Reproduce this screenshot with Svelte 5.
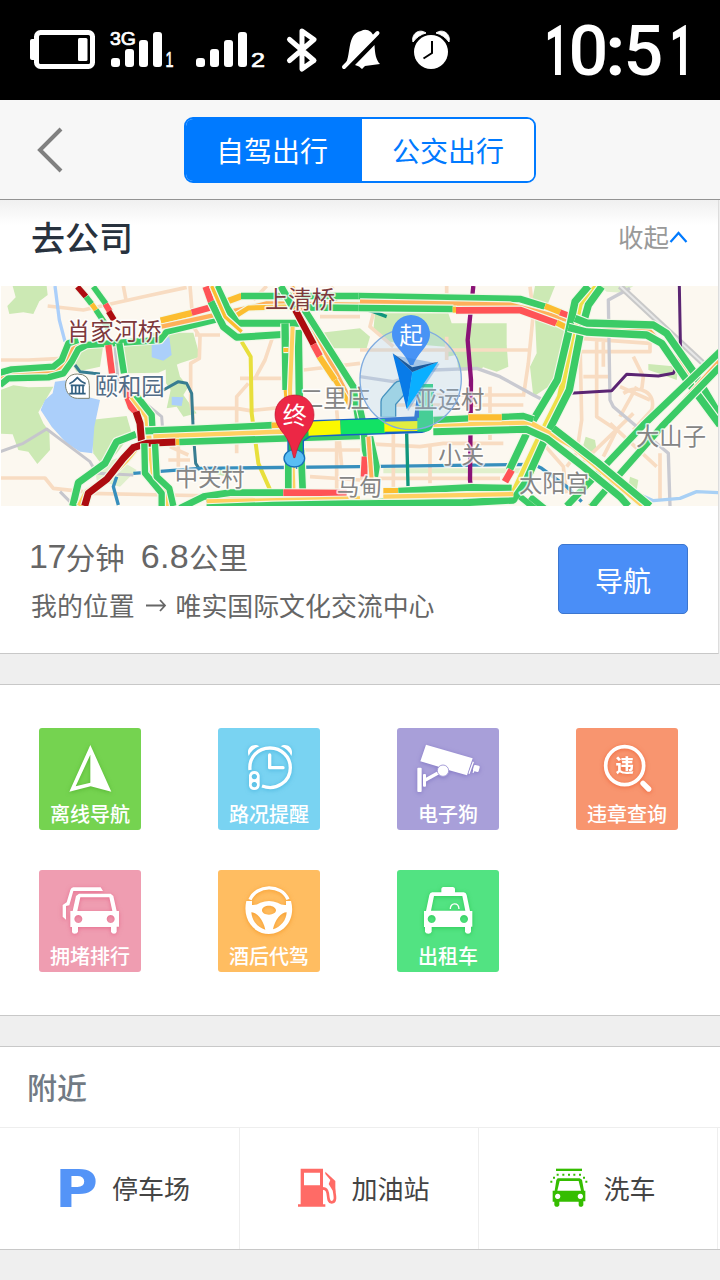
<script>
  const G = '#3bcb66', Y = '#ffd060', O = '#ffb05a', R = '#ff5356', D = '#ad0c10', A = '#fcbd30', L = '#efe048';

  // Areas: [path, fill]
  const areas = [
    ['M38 18H140L143 45 118 64 100 102 70 97 28 102 22 78 47 52Z', '#cce9b4'],
    ['M0 330L40 316 85 322 160 320 115 397 130 430 148 455 150 510 112 552 85 515 55 510 38 463 0 461Z', '#cce9b4'],
    ['M455 158H580L600 230 540 250 475 278 380 280 370 200 455 185Z', '#cce9b4'],
    ['M190 215L310 195 300 260 230 275Z', '#cce9b4'],
    ['M270 420L380 408 395 460 350 520 310 560 280 520Z', '#cce9b4'],
    ['M285 560L350 535 410 570 360 620 290 600Z', '#e0f0cc'],
    ['M497 258L530 252 540 290 565 320 550 345 590 400 550 410 530 380 500 385 512 330 498 310Z', '#cce9b4'],
    ['M950 160L1080 145 1110 170 1100 205H1000L955 200Z', '#cce9b4'],
    ['M650 560L700 570 680 590 640 580Z', '#cce9b4'],
    ['M1125 100H1345L1355 130H1520V195L1440 270 1375 272 1370 225 1340 230 1335 200 1160 185 1120 150Z', '#cce9b4'],
    ['M1450 185L1520 195 1525 260 1490 275 1450 262Z', '#cce9b4'],
    ['M1605 18H1665L1640 80 1595 70Z', '#cce9b4'],
    ['M1605 110H1700L1675 300 1600 350 1590 260 1610 220Z', '#cce9b4'],
    ['M1800 18H1900L1870 38 1820 35Z', '#e0f0cc'],
    ['M1945 252L2035 260 2030 300 1975 280 1945 270Z', '#cce9b4'],
    ['M1757 470L1785 480 1790 510 1765 520 1750 495Z', '#cce9b4'],
    ['M1890 590L1915 600 1910 630 1885 620Z', '#cce9b4'],
    ['M1150 565H1560L1580 580H1150Z', '#e0f0cc'],
    ['M165 305L205 300 260 350 300 360 283 440 277 520 240 515 200 490 155 440 122 390 135 360 158 340Z', '#abcffa'],
    ['M455 175L508 172 515 225 490 242 455 232Z', '#abcffa'],
    ['M515 350L550 352 545 378 515 375Z', '#abcffa']
  ];

  // Minor streets, drawn thin without casing: [path, stroke, width]
  const streets = [
    ['M143 78L250 90 430 50 560 22M370 18L378 60M570 18L580 140 600 170 598 235 572 250V360L580 420M0 240H85L190 235M585 165H660M820 165L795 240 765 295M720 295H870M580 385H710L750 392 870 380M710 520V350L745 310M800 18L760 60M960 60L1000 20M930 120L970 180M910 270L1080 250M1010 390L1025 560M870 510H1080M930 590L1080 600M960 110H1080M1010 430V650M510 500L565 525M505 540H570M535 490V560M0 594H135L160 625 250 635M270 640L500 645 760 650', '#f8dcc2', 11],
    ['M1120 100L1110 140 1180 200M1080 210H1590M1590 20L1600 100 1585 250 1570 350M1340 240V170M1160 345H1570M1160 375H1570M1470 320V480M1080 490L1260 500 1330 490 1510 490M1180 440V660M1290 500V610M1080 595H1500M1740 175L1950 190V215H1740M1740 180L1745 420 1730 520 1700 560M1750 290H1830M1790 180V410L1850 450 1810 530M1810 185V260M1900 230L1930 290 1925 330M1860 320L1950 360M1910 320L1860 410M1870 340C1920 310 1970 340 1955 390L1900 450M1830 430L1970 560M1740 555L1900 400M1620 480L1690 560 1700 640M1980 520V660M1340 18V60', '#f8dcc2', 11],
    ['M165 18L178 120 195 185', '#abcffa', 10],
    ['M0 515L70 490 140 447 170 470 270 545 290 580 400 585M430 365L485 410 492 500M345 200L355 310M180 635L215 670', '#c6c6cc', 9],
    ['M1080 290L1180 305 1300 270 1430 265 1500 290 1600 345 1640 365M1890 25L1825 60 1830 360 1840 380 1940 465 2005 520 2010 678', '#c9cad1', 10],
    ['M1860 18L2115 255', '#c9c9c9', 18],
    ['M1860 18L2115 255', '#e8e8e8', 6],
    ['M725 185L752 230 755 400 775 550 815 640 820 665', '#e8df3c', 12],
    ['M225 255L240 275 280 280 300 282M490 330L535 305 560 310 575 340 580 460 587 550 600 570M615 640L625 665', '#377d91', 9],
    ['M400 580L600 565 1080 560 1600 553 1625 565 1700 620 1745 665M350 590L340 620 355 675', '#378fbd', 10],
    ['M1000 65L1120 95 1160 110M1220 460L1225 655', '#10967c', 10],
    ['M1420 18L1403 180 1413 300 1410 600 1420 678', '#8a1377', 13],
    ['M2038 18L2042 235 2020 280 1975 288 1880 283 1835 332 1710 340', '#5b2573', 9],
    ['M1910 640L1960 662 2040 655 2090 635 2160 638', '#a8d0f5', 10]
  ];

  // Main roads with a pale casing: [path, stroke, width]
  const roads = [
    ['M0 297L55 276 155 274 195 255 215 210 240 190', O, 13],
    ['M0 278L35 268 160 260 185 240 205 190 235 180', G, 19],
    ['M0 315L25 295 145 292 190 280 215 245 235 208 260 195 480 180 500 155 650 118', G, 19],
    ['M482 122L580 98', A, 19], ['M575 98L640 80', R, 19], ['M638 80L725 48', A, 19], ['M484 140L750 82 800 70 1080 74', O, 13],
    ['M723 48L1080 48', G, 19], ['M700 112L745 84 900 80', A, 15], ['M900 82L1080 84', G, 20],
    ['M232 20L258 50', D, 17], ['M258 50L275 72', G, 17], ['M275 72L288 90', A, 15], ['M288 90L325 145', G, 17],
    ['M280 20L320 75', G, 17], ['M316 72L330 95', R, 18], ['M326 94L342 120', D, 18],
    ['M325 195L336 280', R, 19], ['M358 190L372 280', G, 19], ['M375 325L395 380 415 400', R, 24],
    ['M395 350L440 410 452 520 462 600 500 640V678', Y, 15],
    ['M408 345L455 405 458 455', G, 19],
    ['M435 453L590 447 820 436', G, 21], ['M815 436L850 435', A, 17],
    ['M460 470L850 455', Y, 14],
    ['M408 463L350 485 315 550 235 608 218 678', G, 21],
    ['M425 485L380 540 320 600 260 635 238 678', Y, 15],
    ['M408 395L420 430 425 490', D, 21], ['M254 678L265 640 320 598 370 535 400 503 440 490 527 486', D, 21],
    ['M527 486H540', A, 19], ['M538 486L1080 468', G, 20],
    ['M433 490L435 580 485 640V678', G, 19], ['M465 492L470 590 508 625 520 678', G, 19],
    ['M617 20L635 70', R, 20], ['M650 18L680 82 712 130H905', G, 21], ['M633 65L670 140 710 172 905 160', G, 21],
    ['M635 18L675 110 725 155', A, 10],
    ['M855 130L858 330M895 150L898 355', G, 22], ['M850 210H866', A, 12],
    ['M858 330L865 410', A, 14], ['M878 140L870 330 882 678', Y, 12],
    ['M842 18L880 85', G, 21], ['M875 18L1045 350', O, 13], ['M886 90L942 195', D, 20], ['M940 193L960 230', R, 20], ['M958 230L1005 300', A, 18], ['M914 90L1060 320 1080 450', G, 20],
    ['M1005 300L1050 375', A, 14],
    ['M865 520V678M903 510L910 678', G, 20],
    ['M540 685L610 650 690 638 850 638', G, 20], ['M850 638L1040 639', R, 20], ['M620 665L1080 656', Y, 14], ['M620 683L820 675 1080 670 1220 662', G, 20],

    ['M1075 48L1560 57 1635 80', G, 20], ['M1080 66L1530 75 1590 90 1700 118', O, 15], ['M1075 84L1360 87', G, 20], ['M1358 89H1370', A, 18],
    ['M1368 91L1560 90 1670 130', R, 20], ['M1635 78L1685 98', A, 18], ['M1680 97L1710 108', R, 18], ['M1670 128L1710 148', A, 18],
    ['M1790 20L1740 70 1715 180 1680 350 1610 490 1535 650', L, 18],
    ['M1765 18L1725 65 1705 160 1672 300 1594 430 1528 570', G, 22],
    ['M1805 20L1765 75 1740 165 1708 330 1645 455 1575 610 1540 660 1390 668 1080 672', G, 22],
    ['M1780 148L1950 155 2030 240 2160 400', O, 14],
    ['M1725 115L1760 129 1960 135 2000 160 2080 275 2160 410', G, 22],
    ['M1705 142L1760 156 1940 165 1985 190 2060 300 2160 435', G, 22],
    ['M2160 242L1770 678', O, 14],
    ['M2160 215L1930 435 1765 610 1700 678', G, 20],
    ['M2160 260L1985 440 1800 650 1775 680', G, 20],
    ['M1300 435L1590 428 1720 500 1820 585 1930 678', Y, 15],
    ['M1300 420L1405 415M1500 411L1570 408 1600 418', G, 19], ['M1405 412L1505 412', A, 19],
    ['M1300 455L1580 448 1640 475 1750 560 1860 650 1885 678', G, 21],
    ['M1660 445L1790 545 1950 678', G, 21],
    ['M1535 570L1515 605', R, 21],
    ['M1080 385L1090 430 1095 510 1100 530M1110 470L1130 560 1125 590', G, 19], ['M1095 530L1092 590', R, 20], ['M1105 470L1115 600', O, 12],
    ['M1150 633H1195', A, 18], ['M1195 633L1415 622 1535 624', G, 20], ['M1150 650L1540 642', Y, 13],
    ['M1560 650L1610 690M1590 650L1640 690', G, 18]
  ];

  const places = [
    { t: '二里庄', x: 900, y: 380, c: '#858585' }, { t: '中关村', x: 524, y: 618, c: '#858585' },
    { t: '马甸', x: 1010, y: 645, c: '#858585', s: 68 }, { t: '小关', x: 1315, y: 549, c: '#858585', s: 69 },
    { t: '亚运村', x: 1243, y: 384, c: '#858585' }, { t: '太阳宫', x: 1557, y: 637, c: '#858585' },
    { t: '大山子', x: 1908, y: 494, c: '#858585' },
    { t: '肖家河桥', x: 200, y: 181, c: '#7d393d', s: 71 }, { t: '上清桥', x: 795, y: 85, c: '#7d393d' },
    { t: '颐和园', x: 284, y: 345, c: '#526c86' }
  ];

  const tools = [
    { id: 'nav', label: '离线导航', bg: '#75d350', box: '57 39 306 222', sh: '#3da01c' },
    { id: 'clock', label: '路况提醒', bg: '#79d3f2', box: '594 39 306 222', sh: '#239fd0' },
    { id: 'camera', label: '电子狗', bg: '#a89fd9', box: '51 39 306 222', sh: '#6255b0' },
    { id: 'search', label: '违章查询', bg: '#f8956f', box: '588 39 306 222', sh: '#e64518' },
    { id: 'jam', label: '拥堵排行', bg: '#ef9db1', box: '57 30 306 222', sh: '#e04470' },
    { id: 'wheel', label: '酒后代驾', bg: '#ffbd61', box: '594 30 306 222', sh: '#ef8100' },
    { id: 'taxi', label: '出租车', bg: '#52e382', box: '51 30 306 222', sh: '#10b832' }
  ];
</script>

<div class="screen">
  <header class="status">
    <svg width="720" height="100" viewBox="0 0 720 100" fill="#fff">
      <rect x="36.5" y="32.500" width="56" height="34" rx="4" fill="none" stroke="#fff" stroke-width="5" />
      <rect x="30" y="39" width="7" height="21" rx="2" /><rect x="78" y="38" width="9.500" height="23" rx="1.500" />
      <rect x="111" y="58" width="9" height="9" rx="3" /><rect x="125" y="49" width="9" height="18" rx="3" />
      <rect x="139" y="40" width="9" height="27" rx="3" /><rect x="153" y="32" width="9" height="35" rx="3" />
      <rect x="196" y="58" width="9" height="9" rx="3" /><rect x="210" y="49" width="9" height="18" rx="3" />
      <rect x="224" y="40" width="9" height="27" rx="3" /><rect x="238" y="32" width="9" height="35" rx="3" />
      <text class="tiny" x="110" y="45" font-size="18" textLength="26" lengthAdjust="spacingAndGlyphs">3G</text>
      <text class="tiny" x="165.500" y="67" font-size="22" textLength="8" lengthAdjust="spacingAndGlyphs">1</text>
      <text class="tiny" x="251" y="67" font-size="21" textLength="14" lengthAdjust="spacingAndGlyphs">2</text>
      <path d="M289.500 39.500L314 60.500 302 69V31L314 39.500 289.500 60.500" fill="none" stroke="#fff" stroke-width="5" stroke-linecap="round" stroke-linejoin="round" />
      <path d="M344 67C352 56 346 34 361 31Q366 28 371 32L374 36 346 66Z" />
      <path d="M374.500 45L355 65 359 66.500 362 69 365 66 380 64C376 60 375 54 374.500 45Z" />
      <path d="M344 67L377.500 33" stroke="#fff" stroke-width="4" stroke-linecap="round" />
      <circle cx="431" cy="52" r="17" />
      <path d="M413 42C411 34 419 28 426 33Q418 35 413 42ZM449 42C451 34 443 28 436 33Q444 35 449 42Z" stroke="#fff" />
      <path d="M432 41V53L423.500 58.500" fill="none" stroke="#000" stroke-width="2" />
      <g class="time">
        <text class="one" x="544.500" y="75" textLength="24" lengthAdjust="spacingAndGlyphs">1</text>
        <text x="568.500" y="75">0</text><text class="one" x="605.500" y="75">:</text><text x="623.500" y="75">5</text>
        <text class="one" x="669.500" y="75" textLength="24" lengthAdjust="spacingAndGlyphs">1</text>
      </g>
    </svg>
  </header>

  <nav class="bar">
    <svg class="back" width="30" height="48" viewBox="0 0 30 48"><path d="M26 3L5 24 26 45" fill="none" stroke="#808080" stroke-width="4" /></svg>
    <div class="tabs"><button class="tab active">自驾出行</button><button class="tab">公交出行</button></div>
  </nav>

  <section class="trip">
    <div class="trip-head">
      <h1>去公司</h1>
      <div class="fold"><span>收起</span><svg width="19" height="16" viewBox="0 0 19 16"><path d="M1.500 12L9.500 3 17.500 12" fill="none" stroke="#007aff" stroke-width="2.200" /></svg></div>
    </div>
    <svg class="map" width="717" height="220" viewBox="3 18 2151 660" preserveAspectRatio="none">
      <rect width="2160" height="700" fill="#fcf8f0" />
      {#each areas as [d, c]}<path {d} fill={c} />{/each}
      <g fill="none" stroke-linejoin="round">
        {#each streets as [d, c, w]}<path {d} stroke={c} stroke-width={w} />{/each}
        {#each roads as [d, c, w]}
          <path {d} stroke="#f2f7e8" stroke-width={w + 7} />
          <path {d} stroke={c} stroke-width={w} />
        {/each}
      </g>
      <g fill="none" stroke-linejoin="round">
        <path d="M887 530V470L925 446 1265 434 1278 330" stroke="#1761c5" stroke-width="50" />
        <path d="M887 530V470L925 446" stroke="#18b85a" stroke-width="42" />
        <path d="M925 446L1022 442" stroke="#fbf800" stroke-width="42" />
        <path d="M1022 442L1155 438" stroke="#12e264" stroke-width="42" />
        <path d="M1153 440L1255 438" stroke="#fbf800" stroke-width="30" />
        <path d="M1165 410V365L1200 325H1250" stroke="#287fac" stroke-width="48" />
        <path d="M1165 410V365L1200 325H1255" stroke="#9fd5df" stroke-width="40" />
        <path d="M1252 434H1278V312" stroke="#28cf74" stroke-width="42" />
      </g>
      <g class="place">
        {#each places as p}<text x={p.x} y={p.y} fill={p.c} font-size={p.s ?? 70}>{p.t}</text>{/each}
      </g>
      <path d="M232 282C180 282 190 355 232 355H268V317Q268 282 232 282Z" fill="#fff" stroke="#7d816e" stroke-width="3" />
      <path d="M208 311Q220 307 232 293 244 307 257 311M212 316H254M216 318V340M227 318V340M238 318V340M249 318V340M208 341H257" stroke="#315f80" stroke-width="5" fill="none" />
      <circle cx="1232" cy="297" r="152" fill="#9ecbf8" fill-opacity=".26" stroke="#80ace0" stroke-width="4" />
      <path d="M1233 105C1202 105 1176 130 1176 162 1176 198 1210 210 1230 255H1240C1255 215 1290 198 1290 162 1290 130 1264 105 1233 105Z" fill="#4893f5" />
      <text class="mark" x="1233" y="191" font-size="71">起</text>
      <path d="M1178 220L1315 245 1220 388Z" fill="#2e7dd5" opacity=".35" transform="translate(4 6)" />
      <path d="M1178 220L1237 276 1220 388Z" fill="#087be8" /><path d="M1315 245L1237 276 1220 388Z" fill="#0aafff" />
      <path d="M1178 220L1237 262 1315 245 1237 276Z" fill="#1c5a9b" />
      <ellipse cx="883" cy="535" rx="31" ry="26" fill="#59bef4" stroke="#1770b9" stroke-width="4" />
      <path d="M884 345C850 345 825 371 825 404 825 430 841 448 856 468 870 487 876 512 881 533H885C892 504 899 486 912 468 927 448 942 430 942 404 942 371 918 345 884 345Z" fill="#ec2745" stroke="#bf1730" stroke-width="2" />
      <text class="mark" x="884" y="432" font-size="72">终</text>
    </svg>
    <div class="summary">
      <div class="info">
        <p class="eta"><b>17</b>分钟<i></i><b class="km">6.8</b>公里</p>
        <p class="route">我的位置<svg width="41" height="22" viewBox="0 0 41 22"><path d="M11 12.500H30M25 7L30 12.500 25 18" fill="none" stroke="#666" stroke-width="1.800" /></svg>唯实国际文化交流中心</p>
      </div>
      <button class="go">导航</button>
    </div>
  </section>

  <section class="tools">
    {#each tools as tool}
      <div class="tile" style:background={tool.bg}>
        <svg width="102" height="74" viewBox={tool.box} fill="#fff" style:filter={`drop-shadow(0 1px 2px ${tool.sh}88)`}>
          {#if tool.id === 'nav'}
            <path fill-rule="evenodd" d="M211 90L274 230 212 214 148 230ZM211 119L167 214 211 203Z" />
          {:else if tool.id === 'clock'}
            <path d="M690 165C686 128 713 99 750 99 784 99 811 125 811 158 811 199 770 229 726 213" fill="none" stroke="#fff" stroke-width="10" />
            <path d="M749 120V158H789" fill="none" stroke="#fff" stroke-width="10" stroke-linecap="round" stroke-linejoin="round" />
            <path d="M686 123C676 96 703 82 718 94Q696 102 686 123ZM814 123C824 96 797 82 782 94Q804 102 814 123Z" />
            <path fill-rule="evenodd" d="M687 181Q690 168 703 168T719 181V212Q716 225 703 225T687 212ZM703 177A8 8 0 1 0 703.100 177ZM703 201A8 8 0 1 0 703.100 201Z" />
          {:else if tool.id === 'camera'}
            <path d="M138 89L278 130 261 181 205 165 171 154 121 139Z" /><path d="M280 140L267 176M287 155L279 173" stroke="#fff" stroke-width="4" />
            <rect x="280" y="151" width="18" height="19" rx="4" transform="rotate(15 289 160)" />
            <rect x="112" y="158" width="13" height="73" rx="3" /><rect x="129" y="177" width="9" height="38" rx="3" />
            <path d="M136 195L178 172" stroke="#fff" stroke-width="10" /><circle cx="189" cy="167" r="17" stroke="#a89fd9" stroke-width="3" />
          {:else if tool.id === 'search'}
            <circle cx="734" cy="152" r="57" fill="none" stroke="#fff" stroke-width="11" />
            <path d="M789 205L806 222" stroke="#fff" stroke-width="16" stroke-linecap="round" /><text class="seal" x="734" y="172">违</text>
          {:else if tool.id === 'jam'}
            <path fill-rule="evenodd" d="M177 101H272L280 108 290 153H297V200H290V215Q289 221 282 221T273 215V201H174V215Q172 221 164 221T156 215V201H151V153H158L168 108ZM181 112L172 153H277L268 112ZM175 165A12 12 0 1 0 175.100 165ZM272 165A12 12 0 1 0 272.100 165Z" />
            <path d="M249 93L242 82H160Q154 82 151 90L140 127 128 135V170L138 179V138L148 136 160 93Z" />
          {:else if tool.id === 'wheel'}
            <path d="M690 119C709 73 784 71 804 118" fill="none" stroke="#fff" stroke-width="10" />
            <path fill-rule="evenodd" d="M679 123H696V135Q710 136 721 128 747 118 773 128 784 136 798 135V123H813C828 177 793 222 747 222S666 177 679 123ZM747 137C735 137 726 143 726 151S735 164 747 164 768 158 768 151 759 137 747 137ZM694 157C696 181 711 202 736 209 729 178 710 157 694 157ZM800 157C784 157 765 179 759 208 783 201 799 180 800 157Z" />
          {:else}
            <path fill-rule="evenodd" d="M184 97V86Q185 81 190 81H218Q224 82 225 86V97H251Q258 98 260 105L270 153H277V200H273V215Q271 221 264 221T255 215V201H155V215Q153 221 145 221T135 215V201H132V153H138L148 105Q150 98 157 97ZM162 108L153 152H256L247 108ZM155 165A12 12 0 1 0 155.100 165ZM252 165A12 12 0 1 0 252.100 165Z" />
            <path d="M211 147C210 127 236 126 237 147" fill="none" stroke="#fff" stroke-width="4" />
          {/if}
        </svg>
        <span>{tool.label}</span>
      </div>
    {/each}
  </section>

  <section class="nearby">
    <h2>附近</h2>
    <div class="cells">
      <div class="cell">
        <svg class="spill" width="39" height="40" viewBox="0 0 39 40"><text class="park" x="-4" y="38.500" textLength="43" lengthAdjust="spacingAndGlyphs">P</text></svg><span>停车场</span>
      </div>
      <div class="cell">
        <svg width="39" height="40" viewBox="893 415 117 120" fill="#ff6b66"><path fill-rule="evenodd" d="M901 417H968V524H975V531H893V524H901ZM911 429V467H959V429Z" /><path d="M967 476C993 476 975 518 994 518 1013 518 999 483 999 466" fill="none" stroke="#ff6b66" stroke-width="8" /><path d="M975 426L1005 454V488L996 481 985 463 990 451 975 433Z" /></svg><span>加油站</span>
      </div>
      <div class="cell">
        <svg width="39" height="40" viewBox="569 415 117 120" fill="#35bd00"><path d="M587 417H665V424H587Z" /><path d="M589 432h6v6h-6ZM606 432h6v6h-6ZM623 432h6v6h-6ZM639 432h6v6h-6ZM656 432h6v6h-6ZM578 441h6v6h-6ZM570 453h6v6h-6ZM668 441h6v6h-6ZM675 453h6v6h-6Z" /><path fill-rule="evenodd" d="M592 446H658L665 450 671 483H675V515H669V527L665 531H658L655 527V516H597V527L593 531H586L582 527V516H577V483H583L588 451ZM598 454L591 483H662L655 454ZM592 492A8 8 0 1 0 592.100 492ZM660 492A8 8 0 1 0 660.100 492Z" /></svg><span>洗车</span>
      </div>
    </div>
  </section>
</div>

<style>
  :global(body) { background: #efefef; }
  .screen { width: 720px; height: 1280px; overflow: hidden; background: #efefef; font-family: "Liberation Sans", "Noto Sans CJK SC", sans-serif; }
  .screen * { box-sizing: border-box; }
  svg { display: block; flex: none; }
  h1, h2, p { margin: 0; }
  button { padding: 0; border: 0; font-family: "Noto Sans CJK SC", sans-serif; font-weight: 400; }
  .status { height: 100px; background: #000; }
  .tiny { font-family: "Liberation Sans", sans-serif; stroke: #fff; stroke-width: .7px; }
  .time { font: 500 70px Roboto, sans-serif; }
  .one { font-weight: 700; }
  .bar { height: 100px; display: flex; align-items: center; padding-left: 35px; background: #f7f7f7; border-bottom: 1px solid #939393; }
  .tabs { display: flex; width: 352px; height: 66px; margin-left: 119px; border: 2px solid #007aff; border-radius: 9px; overflow: hidden; background: #fff; }
  .tab { flex: 0 0 176px; padding-right: 4px; background: #fff; color: #007aff; font-size: 28px; line-height: 62px; }
  .active { background: #007aff; color: #fff; }
  .trip { width: 719px; height: 454px; background: #fff; border-right: 1px solid #ddd; border-bottom: 1px solid #c8c8c8; }
  .trip-head { display: flex; justify-content: space-between; height: 86px; padding: 0 30px 11px 31px; align-items: center; background: linear-gradient(#f0f0f0, #fff 25px); }
  h1 { font-size: 34px; line-height: 48px; font-weight: 500; color: #28323e; padding-top: 2px; }
  .fold { display: flex; align-items: center; color: #999; font-size: 25.500px; line-height: 36px; }
  .map { margin-left: 1px; }
  .place { font-family: "Noto Sans CJK SC", sans-serif; stroke: #fff; stroke-opacity: .8; stroke-width: 9px; paint-order: stroke; stroke-linejoin: round; }
  .mark { font-family: "Noto Sans CJK SC", sans-serif; fill: #fff; text-anchor: middle; }
  .summary { display: flex; justify-content: space-between; padding: 28px 30px 0 31px; color: #666; }
  .eta { display: flex; align-items: center; height: 44px; font-size: 29.500px; }
  .eta b { font-weight: 400; font-size: 34px; margin-left: -2px; letter-spacing: -.5px; }
  .eta i { width: 16px; }
  .eta .km { margin-left: 0; letter-spacing: .3px; }
  .route { display: flex; align-items: center; height: 52px; font-size: 25.900px; }
  .go { width: 130px; height: 70px; margin-top: 10px; border: 1px solid #3c76cf; border-radius: 5px; background: #4a8ef7; color: #fff; font-size: 28px; line-height: 70px; }
  .tools { display: grid; grid-template-columns: repeat(4, 102px); grid-auto-rows: 102px; column-gap: 77px; row-gap: 40px; height: 332px; margin-top: 30px; padding: 43px 39px 0; background: #fff; border-top: 1px solid #c8c8c8; border-bottom: 1px solid #c8c8c8; }
  .tile { border-radius: 3px; color: #fff; text-align: center; }
  .tile span { display: block; font-size: 20px; font-weight: 500; line-height: 26px; white-space: nowrap; }
  .seal { font: 900 55px "Noto Sans CJK SC", sans-serif; text-anchor: middle; }
  .nearby { height: 204px; margin-top: 30px; background: #fff; border-top: 1px solid #c8c8c8; border-bottom: 1px solid #c8c8c8; }
  h2 { height: 81px; padding-left: 27px; border-bottom: 1px solid #eee; color: #717a84; font-size: 30px; font-weight: 500; line-height: 83px; }
  .cells { display: grid; grid-template-columns: 240px 239px 239px; height: 121px; }
  .cell { display: flex; align-items: center; justify-content: center; gap: 14px; border-right: 1px solid #eee; color: #444; font-size: 26px; padding: 0 0 2px 10px; }
  .spill { overflow: visible; }
  .park { font: 700 52px "DejaVu Sans", sans-serif; fill: #5494f7; }
</style>
